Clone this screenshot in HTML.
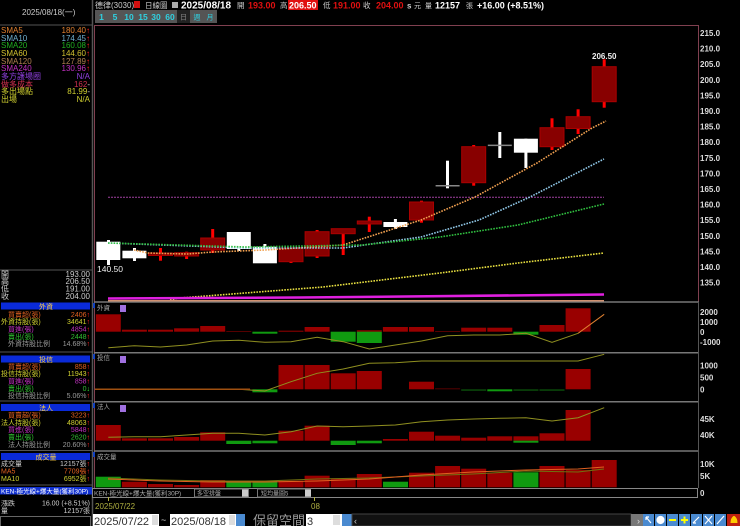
<!DOCTYPE html>
<html><head><meta charset="utf-8"><style>
html,body{margin:0;padding:0;background:#000;width:740px;height:526px;overflow:hidden}
svg{display:block}
text{font-family:"Liberation Sans","Noto Sans CJK TC",sans-serif}
.s{font-size:8px}
</style></head><body>
<svg width="740" height="526" viewBox="0 0 740 526" xmlns="http://www.w3.org/2000/svg">
<rect width="740" height="526" fill="#000"/>
<line x1="92.5" y1="0" x2="92.5" y2="526" stroke="#555" stroke-width="1.5"/>
<line x1="0" y1="25" x2="92" y2="25" stroke="#555"/>
<text x="22" y="15" class="s" fill="#ccc">2025/08/18(一)</text>
<g class="s" font-size="7.5">
<text x="1" y="33" fill="#e08030">SMA5</text><text x="90" y="33" fill="#e08030" text-anchor="end">180.40<tspan fill="#f22">↑</tspan></text>
<text x="1" y="41" fill="#70b0d0">SMA10</text><text x="90" y="41" fill="#70b0d0" text-anchor="end">174.45<tspan fill="#f22">↑</tspan></text>
<text x="1" y="48" fill="#20b020">SMA20</text><text x="90" y="48" fill="#20b020" text-anchor="end">160.08<tspan fill="#f22">↑</tspan></text>
<text x="1" y="56" fill="#d0c030">SMA60</text><text x="90" y="56" fill="#d0c030" text-anchor="end">144.60<tspan fill="#f22">↑</tspan></text>
<text x="1" y="64" fill="#b08050">SMA120</text><text x="90" y="64" fill="#b08050" text-anchor="end">127.89<tspan fill="#f22">↑</tspan></text>
<text x="1" y="71" fill="#c030c0">SMA240</text><text x="90" y="71" fill="#c030c0" text-anchor="end">130.96<tspan fill="#f22">↑</tspan></text>
<text x="1" y="79" fill="#9040e0">多方護場圈</text><text x="90" y="79" fill="#9040e0" text-anchor="end">N/A</text>
<text x="1" y="87" fill="#d03050">做多成本</text><text x="90" y="87" fill="#d03050" text-anchor="end">162<tspan fill="#ccc">-</tspan></text>
<text x="1" y="94" fill="#d0d030">多出場點</text><text x="90" y="94" fill="#d0d030" text-anchor="end">81.99<tspan fill="#ccc">-</tspan></text>
<text x="1" y="102" fill="#d0d030">出場</text><text x="90" y="102" fill="#d0d030" text-anchor="end">N/A</text>
</g>
<line x1="0" y1="270" x2="92" y2="270" stroke="#555"/>
<g class="s" font-size="7.5" fill="#ccc">
<text x="1" y="277">開</text><text x="90" y="277" text-anchor="end">193.00</text>
<text x="1" y="284">高</text><text x="90" y="284" text-anchor="end">206.50</text>
<text x="1" y="291.5">低</text><text x="90" y="291.5" text-anchor="end">191.00</text>
<text x="1" y="299">收</text><text x="90" y="299" text-anchor="end">204.00</text>
</g>
<g font-size="7">
<rect x="1" y="302.5" width="89" height="7" fill="#0a2ad8"/><text x="46" y="309" fill="#ffd040" text-anchor="middle">外資</text>
<text x="8" y="317" fill="#e06020">買賣超(張)</text><text x="90" y="317" fill="#e06020" text-anchor="end">2406<tspan fill="#f22">↑</tspan></text>
<text x="1" y="324" fill="#d0d030">外資持股(張)</text><text x="90" y="324" fill="#d0d030" text-anchor="end">34641<tspan fill="#f22">↑</tspan></text>
<text x="8" y="331.5" fill="#c030c0">買進(張)</text><text x="90" y="331.5" fill="#c030c0" text-anchor="end">4854<tspan fill="#f22">↑</tspan></text>
<text x="8" y="339" fill="#30c030">賣出(張)</text><text x="90" y="339" fill="#30c030" text-anchor="end">2448<tspan fill="#f22">↑</tspan></text>
<text x="8" y="346" fill="#999">外資持股比例</text><text x="90" y="346" fill="#999" text-anchor="end">14.68%<tspan fill="#f22">↑</tspan></text>
<line x1="0" y1="352" x2="92" y2="352" stroke="#555"/>
<rect x="1" y="355.5" width="89" height="7" fill="#0a2ad8"/><text x="46" y="362" fill="#ffd040" text-anchor="middle">投信</text>
<text x="8" y="369" fill="#e06020">買賣超(張)</text><text x="90" y="369" fill="#e06020" text-anchor="end">858<tspan fill="#f22">↑</tspan></text>
<text x="1" y="376" fill="#d0d030">投信持股(張)</text><text x="90" y="376" fill="#d0d030" text-anchor="end">11943<tspan fill="#f22">↑</tspan></text>
<text x="8" y="383.5" fill="#c030c0">買進(張)</text><text x="90" y="383.5" fill="#c030c0" text-anchor="end">858<tspan fill="#f22">↑</tspan></text>
<text x="8" y="391" fill="#30c030">賣出(張)</text><text x="90" y="391" fill="#30c030" text-anchor="end">0<tspan fill="#3e3">↓</tspan></text>
<text x="8" y="398" fill="#999">投信持股比例</text><text x="90" y="398" fill="#999" text-anchor="end">5.06%<tspan fill="#f22">↑</tspan></text>
<line x1="0" y1="401" x2="92" y2="401" stroke="#555"/>
<rect x="1" y="404" width="89" height="7" fill="#0a2ad8"/><text x="46" y="410.5" fill="#ffd040" text-anchor="middle">法人</text>
<text x="8" y="417.5" fill="#e06020">買賣超(張)</text><text x="90" y="417.5" fill="#e06020" text-anchor="end">3223<tspan fill="#f22">↑</tspan></text>
<text x="1" y="425" fill="#d0d030">法人持股(張)</text><text x="90" y="425" fill="#d0d030" text-anchor="end">48063<tspan fill="#f22">↑</tspan></text>
<text x="8" y="432" fill="#c030c0">買進(張)</text><text x="90" y="432" fill="#c030c0" text-anchor="end">5848<tspan fill="#f22">↑</tspan></text>
<text x="8" y="439.5" fill="#30c030">賣出(張)</text><text x="90" y="439.5" fill="#30c030" text-anchor="end">2620<tspan fill="#f22">↑</tspan></text>
<text x="8" y="447" fill="#999">法人持股比例</text><text x="90" y="447" fill="#999" text-anchor="end">20.60%<tspan fill="#f22">↑</tspan></text>
<line x1="0" y1="450.5" x2="92" y2="450.5" stroke="#555"/>
<rect x="1" y="453" width="89" height="7" fill="#0a2ad8"/><text x="46" y="459.5" fill="#ffd040" text-anchor="middle">成交量</text>
<text x="1" y="466" fill="#ccc">成交量</text><text x="90" y="466" fill="#ccc" text-anchor="end">12157張<tspan fill="#f22">↑</tspan></text>
<text x="1" y="473.5" fill="#e06020">MA5</text><text x="90" y="473.5" fill="#e06020" text-anchor="end">7709張<tspan fill="#f22">↑</tspan></text>
<text x="1" y="481" fill="#d0d030">MA10</text><text x="90" y="481" fill="#d0d030" text-anchor="end">6952張<tspan fill="#f22">↑</tspan></text>
<line x1="0" y1="485" x2="92" y2="485" stroke="#555"/>
<rect x="0" y="487" width="92" height="7.5" fill="#1030d0"/><text x="1" y="493.5" fill="#fff" font-size="6.5">KEN-極光線+爆大量(獲利30P)</text>
<text x="1" y="505.5" fill="#ccc">漲跌</text><text x="90" y="505.5" fill="#ccc" text-anchor="end">16.00 (+8.51%)</text>
<text x="1" y="513" fill="#ccc">量</text><text x="90" y="513" fill="#ccc" text-anchor="end">12157張</text>
</g>
<rect x="0.5" y="516.5" width="90" height="10" fill="#000" stroke="#666"/>

<g font-size="8">
<text x="95" y="8" fill="#ccc">德律(3030)</text>
<rect x="134" y="1" width="6" height="7" fill="#d01010"/>
<text x="145" y="8" fill="#ccc" font-size="7.5">日線圖</text>
<rect x="172" y="2" width="6" height="6" fill="#aaa"/>
<text x="181" y="8.5" fill="#fff" font-weight="bold" font-size="10">2025/08/18</text>
<text x="237" y="8" fill="#ccc" font-size="7.5">開</text>
<text x="248" y="8.5" fill="#e01010" font-weight="bold" font-size="9">193.00</text>
<text x="280" y="8" fill="#ccc" font-size="7.5">高</text>
<rect x="288" y="0" width="30" height="10" fill="#e01010"/>
<text x="289" y="8.5" fill="#fff" font-weight="bold" font-size="9">206.50</text>
<text x="323" y="8" fill="#ccc" font-size="7.5">低</text>
<text x="333" y="8.5" fill="#e01010" font-weight="bold" font-size="9">191.00</text>
<text x="363" y="8" fill="#ccc" font-size="7.5">收</text>
<text x="376" y="8.5" fill="#e01010" font-weight="bold" font-size="9">204.00</text>
<text x="407" y="8.5" fill="#ccc" font-weight="bold" font-size="8">s</text>
<text x="414" y="8" fill="#ccc" font-size="7">元</text>
<text x="425" y="8" fill="#ccc" font-size="7">量</text>
<text x="435" y="8.5" fill="#fff" font-weight="bold" font-size="9">12157</text>
<text x="466" y="8" fill="#ccc" font-size="7">張</text>
<text x="477" y="8.5" fill="#fff" font-weight="bold" font-size="9">+16.00 (+8.51%)</text>
</g>
<rect x="95" y="10" width="122" height="13" fill="#555"/>
<g font-size="8.5" font-weight="bold" fill="#30d0e0" text-anchor="middle">
<text x="101.5" y="20">1</text><text x="115" y="20">5</text><text x="129" y="20">10</text><text x="143" y="20">15</text><text x="156" y="20">30</text><text x="170" y="20">60</text>
</g>
<rect x="177" y="10" width="13" height="13" fill="#222"/>
<g font-size="7" fill="#30d0e0" text-anchor="middle"><text x="183.5" y="19.5" fill="#888">日</text><text x="197" y="19.5">週</text><text x="210" y="19.5">月</text></g>

<line x1="94" y1="25.5" x2="698" y2="25.5" stroke="#804050"/>
<line x1="94.5" y1="25" x2="94.5" y2="488" stroke="#804050"/>
<line x1="698.5" y1="25" x2="698.5" y2="302" stroke="#804050"/>
<g stroke="#777" stroke-width="1.5">
<line x1="94" y1="302" x2="699" y2="302"/><line x1="94" y1="352.7" x2="699" y2="352.7"/><line x1="94" y1="401.7" x2="699" y2="401.7"/><line x1="94" y1="451" x2="699" y2="451"/>
</g>
<line x1="698.5" y1="302" x2="698.5" y2="488" stroke="#555"/>
<g font-size="8" font-weight="bold" fill="#ddd">
<text x="700" y="36">215.0</text><text x="700" y="51.6">210.0</text><text x="700" y="67.2">205.0</text><text x="700" y="82.8">200.0</text><text x="700" y="98.4">195.0</text><text x="700" y="114">190.0</text><text x="700" y="129.6">185.0</text><text x="700" y="145.2">180.0</text><text x="700" y="160.8">175.0</text><text x="700" y="176.4">170.0</text><text x="700" y="192">165.0</text><text x="700" y="207.6">160.0</text><text x="700" y="223.2">155.0</text><text x="700" y="238.8">150.0</text><text x="700" y="254.4">145.0</text><text x="700" y="270">140.0</text><text x="700" y="285.6">135.0</text>
</g>
<line x1="108" y1="197.3" x2="604" y2="197.3" stroke="#a040a0" stroke-dasharray="2 1"/>
<g stroke="none">
<g fill="#fff">
<rect x="107" y="240" width="3" height="25"/><rect x="133" y="248" width="3" height="13"/>
<rect x="237.3" y="232" width="3" height="19"/><rect x="263.4" y="244" width="3" height="19"/>
<rect x="393.9" y="219" width="3" height="10"/><rect x="524.4" y="138.7" width="3" height="29.3"/>
<rect x="446" y="160.7" width="3" height="27.6"/><rect x="498.3" y="132" width="3" height="26"/>
</g>
<rect x="435.6" y="185" width="24" height="1.5" fill="#888"/>
<rect x="487.8" y="144.6" width="24" height="1.5" fill="#888"/>
<g fill="#fff">
<rect x="96.3" y="241.7" width="24" height="18.3"/><rect x="122.4" y="250.7" width="24" height="7.6"/>
<rect x="226.8" y="232" width="24" height="17"/><rect x="252.9" y="246.7" width="24" height="16.6"/>
<rect x="383.4" y="222" width="24" height="5"/><rect x="513.9" y="138.7" width="24" height="14"/>
</g>
<g fill="#f00">
<rect x="159" y="248" width="3" height="12.7"/><rect x="185.1" y="251.7" width="3" height="7.3"/>
<rect x="211.2" y="229" width="3" height="24"/><rect x="289.5" y="248" width="3" height="15"/>
<rect x="315.6" y="230" width="3" height="28"/><rect x="341.7" y="228.7" width="3" height="26.3"/>
<rect x="367.8" y="216.7" width="3" height="15.3"/><rect x="420" y="200.7" width="3" height="22"/>
<rect x="472.2" y="145" width="3" height="40.7"/><rect x="550.5" y="118.3" width="3" height="31.7"/>
<rect x="576.6" y="109.3" width="3" height="24.7"/><rect x="602.7" y="59.3" width="3" height="48.4"/>
</g>
<g fill="#880000" stroke="#a00" stroke-width="1">
<rect x="148.5" y="253" width="24" height="2.5"/><rect x="174.6" y="252.7" width="24" height="3.3"/>
<rect x="200.7" y="238" width="24" height="12"/><rect x="279" y="248" width="24" height="13.7"/>
<rect x="305.1" y="231.7" width="24" height="24.3"/><rect x="331.2" y="228.7" width="24" height="5"/>
<rect x="357.3" y="221" width="24" height="3"/><rect x="409.5" y="202" width="24" height="18"/>
<rect x="461.7" y="146.7" width="24" height="36"/><rect x="540" y="127.7" width="24" height="19"/>
<rect x="566.1" y="116.7" width="24" height="11.8"/><rect x="592.2" y="66.7" width="24" height="35"/>
</g>
</g>
<text x="97" y="272" font-size="8.5" fill="#eee" font-family="Liberation Serif,serif">140.50</text>
<text x="592" y="59" font-size="8" font-weight="bold" fill="#eee">206.50</text>
<g fill="none" stroke-width="1.6" stroke-dasharray="1.6 1.2">
<polyline stroke="#f0a050" points="134,250 148,253 187,254 213,252 265,250 343,245 421,220 475,197 537,163 592,128 606,121"/>
<polyline stroke="#90c8e8" points="108,243 246,248 343,248 421,237 479,220 530,197 604,159"/>
<polyline stroke="#30c040" points="108,243 246,247 362,245 440,237 518,225 604,204"/>
<polyline stroke="#e8e040" points="170,300 180,298 323,287 440,273 518,263 604,253"/>
</g>
<polyline fill="none" stroke="#e020e0" stroke-width="2.5" points="108,298.5 300,297.5 604,294.5"/>
<line x1="108" y1="300.8" x2="604" y2="300.8" stroke="#d09070" stroke-width="1.5"/>

<g font-size="6.5" fill="#aaa">
<text x="97" y="310">外資</text><text x="97" y="360">投信</text><text x="97" y="409">法人</text><text x="97" y="459">成交量</text>
</g>
<g fill="#a070e0"><rect x="120" y="305" width="6" height="7"/><rect x="120" y="356" width="6" height="7"/><rect x="120" y="405" width="6" height="7"/></g>
<g fill="#1040c0"><rect x="93" y="303" width="2" height="5"/><rect x="93" y="354" width="2" height="5"/><rect x="93" y="403" width="2" height="5"/><rect x="93" y="452" width="2" height="5"/></g>

<g fill="#990000">
<rect x="95.8" y="314.3" width="25" height="17.4"/><rect x="121.9" y="329.7" width="25" height="2"/><rect x="148" y="329.7" width="25" height="2"/><rect x="174.1" y="328.3" width="25" height="3.4"/><rect x="200.2" y="326" width="25" height="5.7"/><rect x="226.3" y="331" width="25" height="1" fill="#500"/><rect x="278.5" y="330.7" width="25" height="1"/><rect x="304.6" y="327" width="25" height="4.7"/><rect x="356.8" y="330.3" width="25" height="1.4"/><rect x="382.9" y="327" width="25" height="4.7"/><rect x="409" y="327" width="25" height="4.7"/><rect x="435.1" y="331" width="25" height="1" fill="#500"/><rect x="461.2" y="327.7" width="25" height="4"/><rect x="487.3" y="327.7" width="25" height="4"/><rect x="539.5" y="325" width="25" height="6.7"/><rect x="565.6" y="308.3" width="25" height="23.4"/>
</g>
<g fill="#109a10">
<rect x="252.4" y="331.7" width="25" height="2"/><rect x="330.7" y="331.7" width="25" height="10"/><rect x="356.8" y="331.7" width="25" height="11.3"/><rect x="513.4" y="331.7" width="25" height="3"/>
</g>
<polyline fill="none" stroke="#909020" stroke-width="1" points="108.3,347.7 134.4,345.7 160.5,347 186.6,345 212.7,341 238.8,340.3 264.9,342.3 291,341.7 317.1,337.3 343.2,341.7 369.3,349 395.4,345 421.5,341 447.6,335.7 473.7,335 499.8,335 525.9,333.3 552,342.3 578.1,333.3"/>
<line x1="578.1" y1="333.3" x2="604.2" y2="314.3" stroke="#e08030"/>
<g font-size="8" font-weight="bold" fill="#ddd"><text x="700" y="315">2000</text><text x="700" y="325">1000</text><text x="700" y="335">0</text><text x="700" y="345">-1000</text></g>

<g fill="#990000">
<rect x="278.5" y="365" width="25" height="24.3"/><rect x="304.6" y="365" width="25" height="24.3"/><rect x="330.7" y="373.3" width="25" height="16"/><rect x="356.8" y="371" width="25" height="18.3"/><rect x="409" y="381.7" width="25" height="7.6"/><rect x="565.6" y="369" width="25" height="20.3"/>
<rect x="435.1" y="388.3" width="25" height="1" fill="#500"/>
</g>
<g fill="#109a10"><rect x="252.4" y="389.3" width="25" height="3"/><rect x="487.3" y="389.3" width="25" height="2"/></g>
<g fill="#0a4a0a"><rect x="461.2" y="389.3" width="25" height="1.5"/><rect x="513.4" y="389.3" width="25" height="1.5"/><rect x="539.5" y="389.3" width="25" height="1.5"/></g>
<polyline fill="none" stroke="#909020" points="108.3,389.3 238.8,389.3 264.9,391 291,381.7 317.1,373.3 343.2,369 369.3,363.3 395.4,362.7 421.5,361 578.1,361 604.2,354.3"/>
<line x1="95" y1="389.3" x2="250" y2="389.3" stroke="#a05010" stroke-width="1.5"/>
<g font-size="8" font-weight="bold" fill="#ddd"><text x="700" y="368.5">1000</text><text x="700" y="380.5">500</text><text x="700" y="392.5">0</text></g>

<g fill="#990000">
<rect x="95.8" y="425" width="25" height="15.7"/><rect x="121.9" y="438.3" width="25" height="2.4"/><rect x="148" y="438.3" width="25" height="2.4"/><rect x="174.1" y="437" width="25" height="3.7"/><rect x="200.2" y="432.3" width="25" height="8.4"/><rect x="278.5" y="430.7" width="25" height="10"/><rect x="304.6" y="425.7" width="25" height="15"/><rect x="382.9" y="439" width="25" height="1.7"/><rect x="409" y="431.7" width="25" height="9"/><rect x="435.1" y="435.7" width="25" height="5"/><rect x="461.2" y="437.7" width="25" height="3"/><rect x="487.3" y="436.3" width="25" height="4.4"/><rect x="513.4" y="436.3" width="25" height="4.4"/><rect x="565.6" y="410" width="25" height="30.7"/><rect x="539.5" y="433.3" width="25" height="7.4"/>
</g>
<g fill="#109a10"><rect x="226.3" y="440.7" width="25" height="3.3"/><rect x="252.4" y="440.7" width="25" height="2.6"/><rect x="330.7" y="440.7" width="25" height="4.3"/><rect x="356.8" y="440.7" width="25" height="2.6"/><rect x="513.4" y="440.7" width="25" height="2"/></g>
<polyline fill="none" stroke="#909020" points="108.3,437.3 134.4,436.7 160.5,436.7 186.6,435 212.7,433.3 238.8,433.3 264.9,435 291,431.7 317.1,426 343.2,426.7 369.3,426 395.4,425 421.5,421.7 447.6,420 473.7,419 499.8,418.3 525.9,417.7 552,421 578.1,417.7 604.2,407.7"/>
<g font-size="8" font-weight="bold" fill="#ddd"><text x="700" y="422">45K</text><text x="700" y="438">40K</text></g>

<g fill="#990000">
<rect x="121.9" y="481.7" width="25" height="5.6"/><rect x="148" y="484" width="25" height="3.3"/><rect x="174.1" y="485" width="25" height="2.3"/><rect x="200.2" y="480" width="25" height="7.3"/><rect x="278.5" y="480.7" width="25" height="6.6"/><rect x="304.6" y="475.7" width="25" height="11.6"/><rect x="330.7" y="478.3" width="25" height="9"/><rect x="356.8" y="474" width="25" height="13.3"/><rect x="409" y="472.7" width="25" height="14.6"/><rect x="435.1" y="466" width="25" height="21.3"/><rect x="461.2" y="468.7" width="25" height="18.6"/><rect x="487.3" y="472.7" width="25" height="14.6"/><rect x="539.5" y="466" width="25" height="21.3"/><rect x="565.6" y="470" width="25" height="17.3"/><rect x="591.7" y="460" width="25" height="27.3"/>
</g>
<g fill="#109a10"><rect x="95.8" y="476.7" width="25" height="10.6"/><rect x="226.3" y="480.7" width="25" height="6.6"/><rect x="252.4" y="480.7" width="25" height="6.6"/><rect x="383" y="481.7" width="25" height="5.6"/><rect x="513.4" y="472.3" width="25" height="15"/></g>
<polyline fill="none" stroke="#707010" points="108,478 160,480 212,481 265,481 317,479 369,478 421,476 473,474 526,471 578,472 604,469"/>
<polyline fill="none" stroke="#e06020" points="108,479 160,481 212,482 265,482 317,481 369,479 421,475 473,472 526,470 578,469 604,467"/>
<g font-size="8" font-weight="bold" fill="#ddd"><text x="700" y="467">10K</text><text x="700" y="479">5K</text><text x="700" y="496">0</text></g>

<rect x="92.5" y="488.5" width="605" height="9" fill="#000" stroke="#888"/>
<text x="94" y="495.5" font-size="6.5" fill="#aaa">KEN-極光線+爆大量(獲利30P)</text>
<rect x="194.5" y="489" width="54" height="8" fill="#000" stroke="#777"/><text x="197" y="495.5" font-size="6" fill="#aaa">多空排盤</text>
<rect x="242" y="489.5" width="6" height="7" fill="#ccc"/>
<rect x="257.5" y="489" width="53" height="8" fill="#000" stroke="#777"/><text x="261" y="495.5" font-size="6" fill="#aaa">短均量圓5</text>
<rect x="305" y="489.5" width="6" height="7" fill="#ccc"/>
<line x1="108.5" y1="497" x2="108.5" y2="501" stroke="#b0b040"/>
<line x1="314.5" y1="497" x2="314.5" y2="501" stroke="#b0b040"/>
<text x="95" y="509" font-size="8" fill="#b0b040">2025/07/22</text>
<text x="311" y="509" font-size="8" fill="#b0b040">08</text>

<rect x="93" y="514" width="66" height="12" fill="#fff"/><text x="94" y="525" font-size="11" fill="#333" font-family="Liberation Serif,serif">2025/07/22</text>
<rect x="152" y="515" width="6" height="10" fill="#ddd"/>
<text x="161" y="523" font-size="9" fill="#ccc">~</text>
<rect x="170" y="514" width="66" height="12" fill="#fff"/><text x="171" y="525" font-size="11" fill="#333" font-family="Liberation Serif,serif">2025/08/18</text>
<rect x="229" y="515" width="6" height="10" fill="#ddd"/>
<rect x="236" y="514" width="9" height="12" fill="#4a8ad0"/>
<text x="253" y="525" font-size="13" fill="#999" font-family="Noto Serif CJK SC,serif">保留空間</text>
<rect x="306" y="514" width="36" height="12" fill="#fff"/><text x="307" y="525" font-size="11" fill="#333">3</text>
<rect x="333" y="515" width="7" height="10" fill="#ddd"/>
<rect x="342" y="514" width="10" height="12" fill="#4a8ad0"/>
<rect x="352" y="514" width="279" height="12" fill="#111" stroke="#444"/>
<text x="354" y="524" font-size="9" fill="#ccc">‹</text>
<rect x="631" y="514" width="12" height="12" fill="#777"/><text x="637" y="524" font-size="9" fill="#ddd">›</text>
<g fill="#4a8ad0"><rect x="643" y="514" width="11" height="12"/><rect x="655" y="514" width="11" height="12"/><rect x="667" y="514" width="11" height="12"/><rect x="679" y="514" width="11" height="12"/><rect x="691" y="514" width="11" height="12"/><rect x="703" y="514" width="11" height="12"/><rect x="715" y="514" width="11" height="12"/></g>
<rect x="727" y="514" width="13" height="12" fill="#c02010"/>
<g stroke="#fff" fill="none" stroke-width="1.2">
<path d="M646 517 L651 523 M646 517 h3 M646 517 v3"/>
<circle cx="660.5" cy="520" r="3.5" fill="#fff"/>
<path d="M669 520 h7" stroke="#ff0" stroke-width="2"/>
<path d="M681 520 h7 M684.5 516.5 v7" stroke="#ff0" stroke-width="2"/>
<path d="M693 523 l6 -6 M693 523 h3"/>
<path d="M705 516 l7 8 M712 516 l-7 8"/>
<path d="M717 524 l7 -8"/>
</g>
<path d="M733.5 516 q-3 2 -3 7 h7 q0 -5 -3 -7z" fill="#ffcc00"/>
</svg>
</body></html>
